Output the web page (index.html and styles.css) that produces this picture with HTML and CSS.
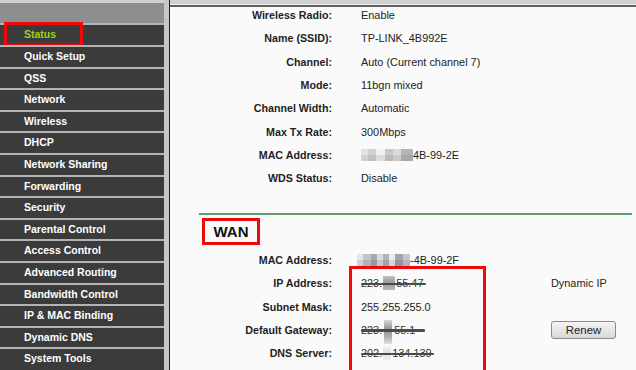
FILE: index.html
```html
<!DOCTYPE html>
<html>
<head>
<meta charset="utf-8">
<link rel="stylesheet" href="styles.css">
</head>
<body>
<div class="sidebar">
  <div class="side-top"></div>
  <div class="item active"><span class="hl"></span>Status</div>
  <div class="item">Quick Setup</div>
  <div class="item">QSS</div>
  <div class="item">Network</div>
  <div class="item">Wireless</div>
  <div class="item">DHCP</div>
  <div class="item">Network Sharing</div>
  <div class="item">Forwarding</div>
  <div class="item">Security</div>
  <div class="item">Parental Control</div>
  <div class="item">Access Control</div>
  <div class="item">Advanced Routing</div>
  <div class="item">Bandwidth Control</div>
  <div class="item">IP &amp; MAC Binding</div>
  <div class="item">Dynamic DNS</div>
  <div class="item">System Tools</div>
</div>
<div class="content">
  <div class="topbar"></div>
  <div class="rows">
    <div class="row"><div class="lbl">Wireless Radio:</div><div class="val">Enable</div></div>
    <div class="row"><div class="lbl">Name (SSID):</div><div class="val">TP-LINK_4B992E</div></div>
    <div class="row"><div class="lbl">Channel:</div><div class="val">Auto (Current channel 7)</div></div>
    <div class="row"><div class="lbl">Mode:</div><div class="val">11bgn mixed</div></div>
    <div class="row"><div class="lbl">Channel Width:</div><div class="val">Automatic</div></div>
    <div class="row"><div class="lbl">Max Tx Rate:</div><div class="val">300Mbps</div></div>
    <div class="row"><div class="lbl">MAC Address:</div><div class="val"><span class="blur mac1"></span>4B-99-2E</div></div>
    <div class="row"><div class="lbl">WDS Status:</div><div class="val">Disable</div></div>
  </div>
  <div class="divider"></div>
  <div class="section-title">WAN</div>
  <div class="rows wan">
    <div class="mark"></div>
    <div class="row"><div class="lbl">MAC Address:</div><div class="val"><span class="blur mac2"></span>-4B-99-2F</div></div>
    <div class="row"><div class="lbl">IP Address:</div><div class="val"><span class="struck s-ip">223.<span class="blur blk-ip"></span>55.47</span></div><div class="extra">Dynamic IP</div></div>
    <div class="row"><div class="lbl">Subnet Mask:</div><div class="val">255.255.255.0</div></div>
    <div class="row"><div class="lbl">Default Gateway:</div><div class="val"><span class="struck s-gw">223.<span class="blur blk-gw"></span>55.1</span></div><div class="extra"><button class="btn">Renew</button></div></div>
    <div class="row"><div class="lbl">DNS Server:</div><div class="val"><span class="struck s-dns">202.<span class="blur blk-dns"></span>134.139</span></div></div>
  </div>
</div>
</body>
</html>
```

FILE: styles.css
```css
html, body {
  margin: 0;
  padding: 0;
}
body {
  width: 636px;
  height: 370px;
  overflow: hidden;
  display: flex;
  font-family: "Liberation Sans", Arial, sans-serif;
  background: #ffffff;
}
.sidebar {
  width: 164px;
  flex: 0 0 164px;
  border-right: 5px solid #c6c6c6;
  background: #3b3b3b;
  height: 370px;
}
.side-top {
  height: 23.4px;
  background: linear-gradient(#cfcfcf 0 3px, #8e8e8e 3px);
}
.item {
  position: relative;
  height: 19.6px;
  line-height: 19.6px;
  border-top: 2px solid #b3b3b3;
  background: #3b3b3b;
  color: #ffffff;
  font-weight: bold;
  font-size: 10.5px;
  padding-left: 24px;
  white-space: nowrap;
}
.item.active {
  color: #a2cf18;
}
.hl {
  position: absolute;
  left: 4px;
  top: -3px;
  width: 73px;
  height: 19px;
  border: 3px solid #ee0a0a;
}
.content {
  flex: 1;
  border-left: 1px solid #1e1e1e;
  background: #fafafa;
  height: 370px;
  position: relative;
}
.topbar {
  height: 7px;
  background: linear-gradient(#d0d0d0 0 4px, #f0f0f0 4px 5px, #5e5e5e 5px);
}
.rows {
  padding-top: 1px;
  position: relative;
}
.row {
  display: grid;
  grid-template-columns: 162px 219px 1fr;
  height: 23.33px;
  line-height: 14px;
  align-items: start;
}
.lbl {
  text-align: right;
  font-weight: bold;
  font-size: 10.7px;
  color: #1e1e1e;
  white-space: nowrap;
}
.val {
  padding-left: 29px;
  font-size: 10.9px;
  color: #222222;
  white-space: nowrap;
  display: flex;
  align-items: center;
  height: 14px;
}
.extra {
  font-size: 10.9px;
  color: #222222;
  white-space: nowrap;
}
.divider {
  height: 2px;
  background: #5f9e73;
  margin: 18.3px 4px 0 29px;
}
.section-title {
  display: inline-block;
  margin: 3px 0 0 32px;
  border: 3px solid #ee0a0a;
  width: 52px;
  height: 21px;
  line-height: 21px;
  box-sizing: content-box;
  text-align: center;
  font-weight: bold;
  font-size: 15px;
  color: #111111;
}
.rows.wan {
  padding-top: 8px;
}
.mark {
  position: absolute;
  left: 179px;
  top: 21px;
  width: 131px;
  height: 110px;
  border: 3px solid #ee0a0a;
}
.blur {
  display: inline-block;
  flex: none;
}
.mac1 {
  width: 52px;
  height: 12px;
  background:
    linear-gradient(#ffffff00 0 6px, #00000014 6px),
    linear-gradient(90deg, #e4e4e4 0 7px, #d2d2d2 7px 15px, #f0f0f0 15px 24px, #c9c9c9 24px 32px, #dadada 32px 40px, #b5b5b5 40px 52px);
}
.mac2 {
  width: 53px;
  height: 12px;
  margin-left: -4px;
  background:
    linear-gradient(#ffffff00 0 6px, #00000018 6px),
    linear-gradient(90deg, #e6e6ea 0 6px, #c4c4cc 6px 14px, #a9a9b4 14px 20px, #dcdce0 20px 26px, #b2b2bc 26px 32px, #ececee 32px 38px, #a4a4ae 38px 46px, #c6c6cc 46px 53px);
}
.struck {
  position: relative;
  display: inline-flex;
  align-items: center;
  color: #333333;
}
.struck::after {
  content: "";
  position: absolute;
  left: 0;
  right: -2px;
  top: 6.5px;
  height: 2.5px;
  border-radius: 1px;
  background: #4a4a4a;
}
.blk-ip {
  width: 12px;
  height: 14px;
  margin: 0 1px;
  background: linear-gradient(#c0c0c0, #9a9a9a 50%, #b8b8b8);
}
.blk-gw {
  width: 8px;
  height: 24px;
  margin: -3px 2px -7px 2px;
  background: linear-gradient(#d6d6d6, #8e8e8e 40%, #b0b0b0 70%, #e0e0e0);
}
.blk-dns {
  width: 8px;
  height: 14px;
  margin: 0 1px;
  background: linear-gradient(#f2f2f2, #dedede 50%, #eeeeee);
}
.s-ip::after { right: -3px; }
.s-gw::after { right: -10px; }
.btn {
  display: block;
  margin-top: -1.5px;
  width: 65px;
  height: 18px;
  padding: 0;
  border: 1px solid #8a8a8a;
  border-radius: 3px;
  background: linear-gradient(#f6f6f6, #e6e6e6 50%, #d8d8d8);
  font-family: "Liberation Sans", Arial, sans-serif;
  font-size: 11.4px;
  color: #222222;
  line-height: 16px;
}
```
